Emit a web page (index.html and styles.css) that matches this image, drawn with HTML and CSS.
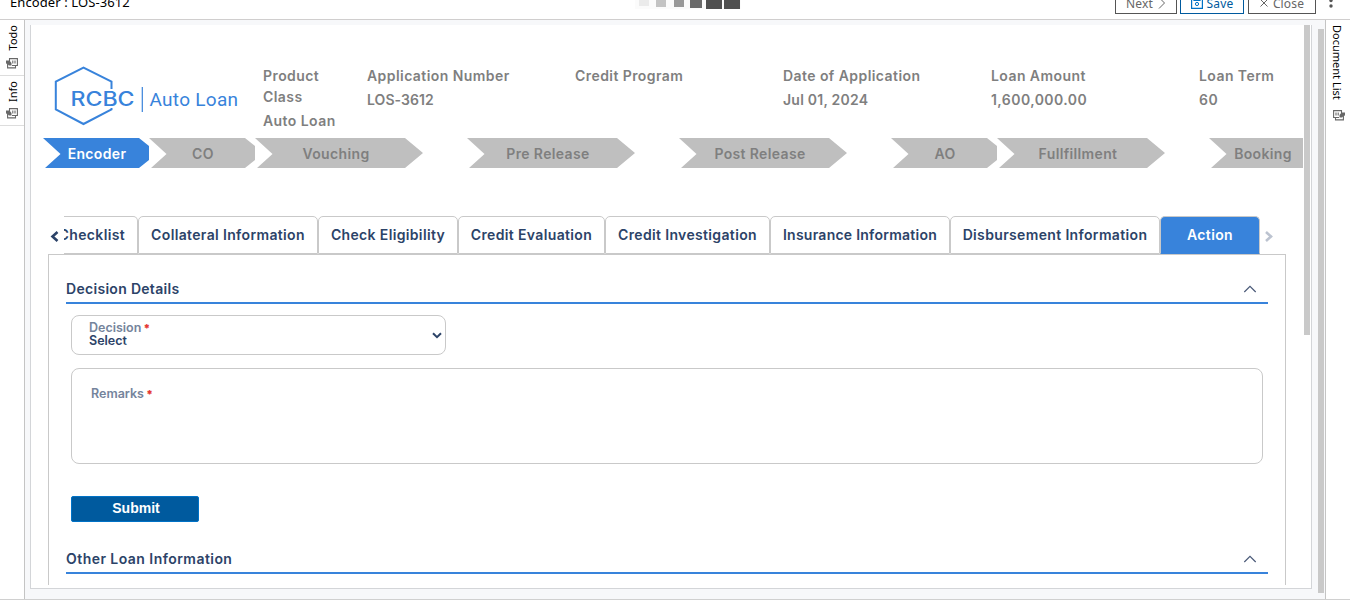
FILE: index.html
```html
<!DOCTYPE html>
<html lang="en">
<head>
<meta charset="utf-8">
<title>Encoder : LOS-3612</title>
<link rel="stylesheet" href="styles.css">
</head>
<body>
<svg class="defs" width="0" height="0">
  <symbol id="news" viewBox="0 0 13 11">
    <path d="M3.500 3V.6H11.400V7.500H6M6.800 2.500v3M9 2.500v3M1.600 5.500V9.900h7.900V7.500" fill="none" stroke="#686868" stroke-width="1.100"/>
    <path d="M0 2.500h3.500L5.500 5v2.500H3L1.500 6 0 5.500z" fill="#686868"/>
  </symbol>
</svg>
<header class="topbar">
  <h1 class="title">Encoder : LOS-3612</h1>
  <div class="loader"><i class="b1"></i><i class="b2"></i><i class="b3"></i><i class="b4"></i><i class="b5"></i><i class="b6"></i></div>
  <div class="actions">
    <button class="btn next">Next <svg width="8" height="12" viewBox="0 0 8 12"><path d="M1 .5l5.500 5.500L1 11.500" fill="none" stroke="#666"/></svg></button>
    <button class="btn save"><svg width="12" height="12" viewBox="0 0 12 12"><path d="M.6.600H11.400V11.400H.6zM3 .6V3.500H9V.6" fill="none" stroke="#0072c6" stroke-width="1.200"/><circle cx="6" cy="7" r="1.600" fill="none" stroke="#0072c6"/></svg>Save</button>
    <button class="btn close"><svg width="8" height="8" viewBox="0 0 8 8"><path d="M.5.500l7 7M7.500.500l-7 7" stroke="#666"/></svg>Close</button>
    <svg class="kebab" width="4" height="16" viewBox="0 0 4 16"><g fill="#555"><circle cx="2" cy="2" r="1.700"/><circle cx="2" cy="8.500" r="1.700"/><circle cx="2" cy="14" r="1.700"/></g></svg>
  </div>
</header>
<div class="main">
  <nav class="rail left">
    <div class="railitem todo"><span>Todo</span><svg width="13" height="11"><use href="#news"/></svg></div>
    <div class="railitem info"><span>Info</span><svg width="13" height="11"><use href="#news"/></svg></div>
  </nav>
  <div class="stage">
    <div class="frame">
      <div class="content">
        <section class="summary">
          <svg class="logo" width="186" height="60" viewBox="0 0 186 60">
            <path d="M57.500 23V15.500L29.500 1.500 1.800 15.500V43.500L29.500 58 57.500 43.500V42" fill="none" stroke="#3883db" stroke-width="2"/>
            <text class="brand" x="16.500" y="40" textLength="64" lengthAdjust="spacingAndGlyphs">RCBC</text>
            <path d="M88.300 21V46" stroke="#3883db" stroke-width="1.200"/>
            <text class="product" x="95.500" y="40" textLength="88.500">Auto Loan</text>
          </svg>
          <dl class="facts">
            <div class="fact"><dt>Product Class</dt><dd>Auto Loan</dd></div>
            <div class="fact wide"><dt>Application Number</dt><dd class="plain">LOS-3612</dd></div>
            <div class="fact wide"><dt>Credit Program</dt></div>
            <div class="fact wide"><dt>Date of Application</dt><dd class="date">Jul 01, 2024</dd></div>
            <div class="fact wide"><dt>Loan Amount</dt><dd>1,600,000.00</dd></div>
            <div class="fact last"><dt>Loan Term</dt><dd>60</dd></div>
          </dl>
        </section>
        <ol class="steps">
          <li class="step short active"><span>Encoder</span></li>
          <li class="step short"><span>CO</span></li>
          <li class="step"><span>Vouching</span></li>
          <li class="step"><span>Pre Release</span></li>
          <li class="step"><span>Post Release</span></li>
          <li class="step short"><span>AO</span></li>
          <li class="step"><span>Fullfillment</span></li>
          <li class="step short"><span>Booking</span></li>
        </ol>
        <div class="tabbar">
          <svg class="arrow prev" width="9" height="11" viewBox="0 0 9 11"><path d="M7.500 1L2.500 5.500 7.500 10" fill="none" stroke="#2c4368" stroke-width="2.600"/></svg>
          <div class="tabs">
            <div class="tab t1"><span>Checklist</span></div>
            <div class="tab t2"><span>Collateral Information</span></div>
            <div class="tab t3"><span>Check Eligibility</span></div>
            <div class="tab t4"><span>Credit Evaluation</span></div>
            <div class="tab t5"><span>Credit Investigation</span></div>
            <div class="tab t6"><span>Insurance Information</span></div>
            <div class="tab t7"><span>Disbursement Information</span></div>
            <div class="tab t8 selected"><span>Action</span></div>
          </div>
          <svg class="arrow nextarrow" width="9" height="11" viewBox="0 0 9 11"><path d="M2 1L7 5.500 2 10" fill="none" stroke="#bcc3d0" stroke-width="2.600"/></svg>
        </div>
        <div class="panel">
          <div class="sectionhead"><h2>Decision Details</h2><svg width="14" height="8" viewBox="0 0 14 8"><path d="M1.300 7L7 1.300 12.700 7" fill="none" stroke="#4a5a78" stroke-width="1.200"/></svg></div>
          <div class="field decision">
            <div><label>Decision <b>*</b></label><div class="value">Select</div></div>
            <svg width="10" height="7" viewBox="0 0 10 7"><path d="M1 1.200L5 5.200 9 1.200" fill="none" stroke="#2c4368" stroke-width="2"/></svg>
          </div>
          <div class="field remarks"><label>Remarks <b>*</b></label></div>
          <button class="submit">Submit</button>
          <div class="sectionhead other"><h2>Other Loan Information</h2><svg width="14" height="8" viewBox="0 0 14 8"><path d="M1.300 7L7 1.300 12.700 7" fill="none" stroke="#4a5a78" stroke-width="1.200"/></svg></div>
        </div>
      </div>
      <div class="thumb inner"></div>
    </div>
    <div class="thumb outer"></div>
  </div>
  <nav class="rail right">
    <div class="railitem"><span>Document List</span><svg width="13" height="11"><use href="#news" transform="matrix(-1 0 0 1 13 0)"/></svg></div>
  </nav>
</div>
</body>
</html>
```

FILE: styles.css
```css
* { box-sizing: border-box; }
body { margin: 0; width: 1350px; height: 615px; overflow: hidden; background: #fff; font-family: Inter, sans-serif; font-weight: 600; font-size: 14px; }
h1, h2, dl, dd, ol { margin: 0; padding: 0; }
svg { display: block; flex: none; }
.defs { display: none; }

.topbar { display: flex; height: 20px; overflow: hidden; border-bottom: 1px solid #d0cece; font-family: "Noto Sans", sans-serif; }
.title { flex: none; width: 635px; margin-top: -7px; padding-left: 10px; font-size: 13px; line-height: 19px; font-weight: 400; color: #000; letter-spacing: .1px; }
.loader { display: flex; align-items: flex-start; width: 106px; height: 9px; padding-left: 4px; background: #fbfbfb; }
.loader i { display: block; flex: none; }
.b1 { width: 10px; height: 6px; background: #ebebeb; }
.b2 { width: 10px; height: 7px; margin-left: 7px; background: #c3c3c3; }
.b3 { width: 10px; height: 7px; margin-left: 8px; background: #999; }
.b4 { width: 12px; height: 8px; margin-left: 6px; background: #6a6a6a; }
.b5 { width: 16px; height: 9px; margin-left: 4px; background: #505050; }
.b6 { width: 16px; height: 9px; margin-left: 2px; background: #505050; }
.actions { display: flex; margin: -8px 0 0 auto; padding-right: 17px; }
.btn { display: flex; align-items: center; justify-content: center; height: 22px; padding: 0; border: 1px solid #555; background: #fff; color: #666; font: 400 12px "Noto Sans", sans-serif; letter-spacing: .15px; }
.next { width: 62px; gap: 5px; margin-right: 3px; }
.save { width: 64px; gap: 4px; margin-right: 4px; border-color: #005a9e; color: #005a9e; }
.close { width: 68px; gap: 5px; margin-right: 13px; }

.main { display: flex; height: 580px; border-bottom: 1px solid #d0d0d0; }
.rail { flex: none; width: 25px; font: 400 11px "Noto Sans", sans-serif; color: #000; }
.left { border-right: 1px solid #c4c4c4; }
.right { border-left: 1px solid #c4c4c4; }
.railitem { display: flex; flex-direction: column; align-items: center; }
.railitem span { writing-mode: vertical-rl; line-height: 15px; }
.left .railitem { border-bottom: 1px solid #ddd; }
.left span { transform: rotate(180deg); }
.left svg { margin: auto 0 6px; }
.todo { height: 56px; padding-top: 5px; }
.info { height: 50px; padding-top: 5px; }
.right .railitem { padding-top: 5px; gap: 10px; }
.right span { margin-right: 2px; }

.stage { display: flex; flex: 1; padding-left: 5px; background: #f7f8fa; }
.frame { display: flex; width: 1282px; height: 564px; margin-top: 5px; border: solid #d3d5d8; border-width: 0 1px 1px; background: #fff; }
.content { width: 1272px; height: 560px; overflow: hidden; }
.thumb { flex: none; width: 6px; background: #c9c9c9; }
.inner { height: 310px; margin-left: 1px; }
.outer { height: 564px; margin: 9px 0 0 6px; }

.summary { display: flex; height: 113px; padding: 40px 0 0 23px; }
.logo { margin: 1px 23px 0 0; }
.brand { font: 500 19.500px Inter, sans-serif; fill: #3883db; }
.product { font: 400 19px Roboto, sans-serif; fill: #3883db; }
.facts { display: flex; color: #7f7f7f; line-height: 21px; letter-spacing: .43px; }
.fact { flex: none; width: 104px; padding-right: 28px; }
.fact.wide { width: 208px; }
.fact.last { padding-right: 0; }
.fact dd { margin-top: 3px; white-space: nowrap; }
.fact .plain { letter-spacing: .05px; }
.fact .date { letter-spacing: .23px; }

.steps { display: flex; width: 1272px; overflow: hidden; list-style: none; padding-left: 12px; letter-spacing: .35px; }
.step { flex: none; width: 212px; height: 30px; }
.step span { display: block; width: 168px; height: 30px; padding-right: 6px; background: #bfbfbf; color: #7f7f7f; text-align: center; line-height: 32px; clip-path: polygon(0 0, 150px 0, 168px 15px, 150px 30px, 2px 30px, 17.500px 16px); }
.step.short { width: 106px; }
.step.short span { width: 106px; padding: 0 0 0 2px; clip-path: polygon(0 0, 96px 0, 106px 8px, 106px 22px, 96px 30px, 2px 30px, 17.500px 16px); }
.step.active span { background: #3883db; color: #fff; }
.step:last-child span { clip-path: polygon(0 0, 106px 0, 106px 30px, 2px 30px, 17.500px 16px); }

.tabbar { display: flex; align-items: flex-end; height: 86px; padding-left: 19px; }
.arrow { margin-bottom: 12px; }
.prev { margin-right: 5px; }
.nextarrow { margin-left: 4px; }
.tabs { display: flex; width: 1196px; }
.tab { flex: none; height: 38px; border: 1px solid #c9c9c9; border-radius: 5px 5px 0 0; color: #2c4368; text-align: center; line-height: 35px; letter-spacing: .35px; white-space: nowrap; overflow: hidden; }
.t1 { display: flex; justify-content: flex-end; width: 74px; border-left: 0; border-top-left-radius: 0; padding-right: 12px; }
.t2 { width: 180px; }
.t3 { width: 140px; }
.t4 { width: 147px; }
.t5 { width: 165px; }
.t6 { width: 180px; letter-spacing: .25px; }
.t7 { width: 210px; }
.t8 { width: 100px; }
.tab.selected { border-bottom-color: #3883db; background: #3883db; color: #fff; }

.panel { width: 1238px; height: 340px; margin-left: 17px; padding: 23px 17px 0; border: 1px solid #c9c9c9; border-bottom: 0; }
.sectionhead { display: flex; justify-content: space-between; align-items: flex-start; height: 26px; padding-right: 11px; border-bottom: 2px solid #3883db; }
.sectionhead h2 { font-size: 14px; line-height: 22px; font-weight: 600; letter-spacing: .3px; color: #2c4368; }
.other h2 { letter-spacing: .45px; }
.sectionhead svg { margin-top: 7px; }
.field { margin-left: 5px; border: 1px solid #c9c9c9; border-radius: 8px; font-size: 12.500px; line-height: 13px; color: #2c4368; }
.field label { color: #75849c; }
.field b { margin-left: -1px; font-size: 11px; color: #e53935; }
.decision { display: flex; justify-content: space-between; width: 375px; height: 40px; margin-top: 11px; padding: 5px 3px 0 17px; }
.decision svg { margin-top: 11px; }
.value { margin-top: -1px; }
.remarks { width: 1192px; height: 96px; margin-top: 13px; padding: 18px 19px; }
.submit { display: block; width: 128px; height: 26px; margin: 32px 0 26px 5px; padding: 0 0 2px 2px; border: 1px solid #0072c6; border-radius: 2px; background: #005a9e; color: #fff; font: 700 14px "Liberation Sans", sans-serif; }
```
